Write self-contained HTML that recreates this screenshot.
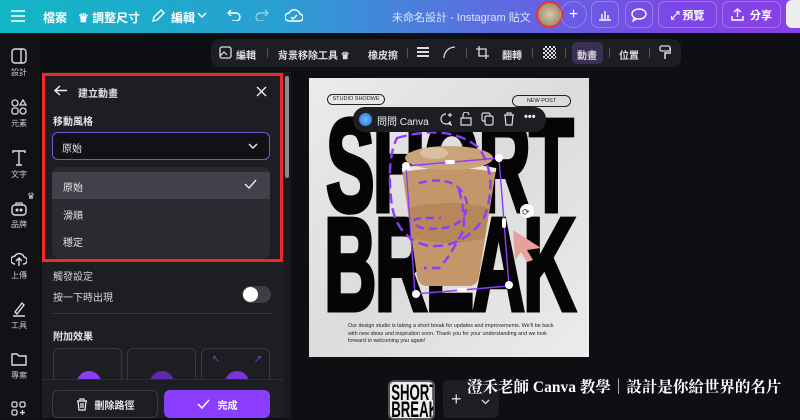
<!DOCTYPE html>
<html><head><meta charset="utf-8"><style>
*{box-sizing:border-box;margin:0;padding:0}
body{width:800px;height:418px;overflow:hidden;background:#0e0f13;font-family:"Liberation Sans","Noto Sans CJK TC",sans-serif;color:#e6e6ea;position:relative;font-size:11px}
.abs{position:absolute}
.top{left:0;top:0;width:800px;height:33px;background:linear-gradient(90deg,#11b7c4 0%,#2a9fd2 35%,#5a6fe0 60%,#7d46e6 85%,#8a3fe8 100%)}
.top .t{position:absolute;top:9px;color:#fff;font-size:12px;font-weight:bold}
.btn{position:absolute;top:1px;height:27px;border:1px solid rgba(255,255,255,.25);border-radius:7px;color:#fff;font-size:11px;font-weight:bold;display:flex;align-items:center;justify-content:center;gap:6px}
.side{left:0;top:33px;width:40px;height:385px;background:#111216}
.si{position:absolute;left:0;width:32px;text-align:center;font-size:8px;color:#ccc}
.si svg{display:block;margin:0 auto 3px}
.panel{left:42px;top:72px;width:242px;height:346px;background:#1d1e23}
.red{left:42px;top:73px;width:241px;height:189px;border:3px solid #f0282a}
.tb{left:211px;top:39px;width:470px;height:28px;background:#1d1e23;border-radius:9px}
.tb span{position:absolute;top:8px;font-size:10px;font-weight:bold;color:#ddd}
.sep{position:absolute;top:9px;width:1px;height:10px;background:#555}
.big{position:absolute;left:-100px;width:480px;text-align:center;font-weight:bold;font-size:132px;line-height:100px;color:#050505;transform:scaleX(.55);letter-spacing:-3px;-webkit-text-stroke:5px #050505}
</style></head><body>
<div class="abs top">
 <svg class="abs" style="left:11px;top:10px" width="14" height="12"><path d="M0 1H14M0 6H14M0 11H14" stroke="#fff" stroke-width="1.6"/></svg>
 <span class="t" style="left:43px">檔案</span>
 <span class="t" style="left:78px">♛ 調整尺寸</span>
 <svg class="abs" style="left:151px;top:9px" width="14" height="14"><path d="M2 12L3 8 10 1 13 4 6 11Z" fill="none" stroke="#fff" stroke-width="1.4"/></svg>
 <span class="t" style="left:171px">編輯</span>
 <svg class="abs" style="left:197px;top:12px" width="10" height="6"><path d="M1 1L5 5 9 1" fill="none" stroke="#fff" stroke-width="1.4"/></svg>
 <svg class="abs" style="left:227px;top:9px" width="14" height="12"><path d="M4 1L1 4 4 7M1 4H9A4 4 0 0 1 9 12H5" fill="none" stroke="#fff" stroke-width="1.4"/></svg>
 <svg class="abs" style="left:255px;top:9px" width="14" height="12" opacity=".5"><path d="M10 1L13 4 10 7M13 4H5A4 4 0 0 0 5 12H9" fill="none" stroke="#fff" stroke-width="1.4"/></svg>
 <svg class="abs" style="left:285px;top:7px" width="18" height="16"><path d="M4 14A4 4 0 0 1 4 6 6 6 0 0 1 15 7 3.5 3.5 0 0 1 14 14Z M6 10L8 12 12 8" fill="none" stroke="#fff" stroke-width="1.4"/></svg>
 <span class="t" style="left:392px;font-weight:normal;color:#dfe6ff;font-size:11px">未命名設計 - Instagram 貼文</span>
 <div class="abs" style="left:536px;top:1px;width:27px;height:27px;border-radius:50%;background:radial-gradient(circle,#d8c8a8,#8a7a5a);border:2px solid #e8323a"></div>
 <div class="btn" style="left:560px;width:27px;border-radius:50%;font-size:16px;font-weight:normal">+</div>
 <div class="btn" style="left:591px;width:28px"><svg width="14" height="12"><path d="M1 11H13M4 10V5M7 10V2M10 10V6" stroke="#fff" stroke-width="1.4"/></svg></div>
 <div class="btn" style="left:625px;width:28px"><svg width="16" height="14"><ellipse cx="8" cy="6" rx="7" ry="5" fill="none" stroke="#fff" stroke-width="1.4"/><path d="M3 10L2 13 6 11" fill="none" stroke="#fff" stroke-width="1.2"/></svg></div>
 <div class="btn" style="left:658px;width:59px">⤢ 預覽</div>
 <div class="btn" style="left:722px;width:59px"><svg width="13" height="13"><path d="M6.5 9V1M3 4L6.5 1 10 4M1 8V12H12V8" fill="none" stroke="#fff" stroke-width="1.4"/></svg>分享</div>
 <div class="abs" style="left:786px;top:0;width:14px;height:28px;background:#eee;border-radius:6px 0 0 6px"></div>
</div>
<div class="abs side">
 <div class="si" style="top:15px;left:3px"><svg width="16" height="16"><rect x="1" y="1" width="14" height="14" rx="3" fill="none" stroke="#ddd" stroke-width="1.4"/><path d="M10 1V15" stroke="#ddd" stroke-width="1.4"/></svg>設計</div>
 <div class="si" style="top:66px;left:3px"><svg width="16" height="16"><circle cx="4" cy="4" r="3" fill="none" stroke="#ddd" stroke-width="1.3"/><path d="M12 1L15 6H9Z" fill="none" stroke="#ddd" stroke-width="1.3"/><rect x="1" y="9" width="6" height="6" rx="2" fill="none" stroke="#ddd" stroke-width="1.3"/><circle cx="12" cy="12" r="3" fill="none" stroke="#ddd" stroke-width="1.3"/></svg>元素</div>
 <div class="si" style="top:117px;left:3px"><svg width="16" height="16"><path d="M2 3V1H14V3M8 1V15M5 15H11" fill="none" stroke="#ddd" stroke-width="1.4"/></svg>文字</div>
 <div class="si" style="top:167px;left:3px"><svg width="16" height="16"><rect x="1" y="5" width="14" height="10" rx="3" fill="none" stroke="#ddd" stroke-width="1.4"/><path d="M5 5V3H11V5" fill="none" stroke="#ddd" stroke-width="1.3"/><circle cx="6" cy="10" r="1.5" fill="#ddd"/><circle cx="10" cy="10" r="1.5" fill="#ddd"/></svg>品牌</div>
 <div style="position:absolute;left:27px;top:158px;color:#ddd;font-size:9px">♛</div>
 <div class="si" style="top:218px;left:3px"><svg width="16" height="16"><path d="M4 13A4 4 0 0 1 4 5 5 5 0 0 1 13 6 3.5 3.5 0 0 1 12 13M8 15V8M5 10L8 7 11 10" fill="none" stroke="#ddd" stroke-width="1.4"/></svg>上傳</div>
 <div class="si" style="top:268px;left:3px"><svg width="16" height="16"><path d="M4 11L11 2 13 4 6 13ZM2 15H14" fill="none" stroke="#ddd" stroke-width="1.4"/></svg>工具</div>
 <div class="si" style="top:318px;left:3px"><svg width="16" height="16"><path d="M1 3H6L8 5H15V14H1Z" fill="none" stroke="#ddd" stroke-width="1.4"/></svg>專案</div>
 <div class="si" style="top:368px;left:3px"><svg width="16" height="16"><rect x="1" y="1" width="5" height="5" rx="1.5" fill="none" stroke="#ddd" stroke-width="1.3"/><rect x="9" y="1" width="5" height="5" rx="1.5" fill="none" stroke="#ddd" stroke-width="1.3"/><rect x="1" y="9" width="5" height="5" rx="1.5" fill="none" stroke="#ddd" stroke-width="1.3"/><path d="M11.5 9V14M9 11.5H14" stroke="#ddd" stroke-width="1.3"/></svg></div>
</div>

<div class="abs panel">
 <svg class="abs" style="left:12px;top:13px" width="13" height="11"><path d="M6 1L1 5.5 6 10M1 5.5H13" fill="none" stroke="#eee" stroke-width="1.5"/></svg>
 <div class="abs" style="left:36px;top:13px;font-size:10px;font-weight:bold">建立動畫</div>
 <svg class="abs" style="left:214px;top:14px" width="11" height="11"><path d="M1 1L10 10M10 1L1 10" stroke="#eee" stroke-width="1.4"/></svg>
 <div class="abs" style="left:11px;top:41px;font-size:10px;font-weight:bold">移動風格</div>
 <div class="abs" style="left:10px;top:60px;width:218px;height:28px;border:1.5px solid #7a55d6;border-radius:6px;background:#111216"></div>
 <div class="abs" style="left:20px;top:68px;font-size:10px">原始</div>
 <svg class="abs" style="left:206px;top:71px" width="10" height="6"><path d="M1 1L5 5 9 1" fill="none" stroke="#eee" stroke-width="1.4"/></svg>
 <div class="abs" style="left:10px;top:95px;width:218px;height:92px;background:#2a2b31;border-radius:8px;overflow:hidden">
  <div style="position:absolute;left:0;top:5px;width:218px;height:27px;background:#40414a"></div>
 </div>
 <div class="abs" style="left:21px;top:107px;font-size:10px">原始</div>
 <svg class="abs" style="left:202px;top:107px" width="13" height="10"><path d="M1 5L5 9 12 1" fill="none" stroke="#eee" stroke-width="1.4"/></svg>
 <div class="abs" style="left:21px;top:135px;font-size:10px">滑順</div>
 <div class="abs" style="left:21px;top:162px;font-size:10px">穩定</div>
 <div class="abs" style="left:11px;top:196px;font-size:10px;color:#ccc">觸發設定</div>
 <div class="abs" style="left:11px;top:217px;font-size:10px;color:#ddd">按一下時出現</div>
 <div class="abs" style="left:200px;top:214px;width:29px;height:17px;border-radius:9px;background:#3d3e45"></div>
 <div class="abs" style="left:201px;top:215px;width:15px;height:15px;border-radius:50%;background:#fff"></div>
 <div class="abs" style="left:11px;top:241px;width:218px;height:1px;background:#3a3b42"></div>
 <div class="abs" style="left:11px;top:256px;font-size:10px;font-weight:bold">附加效果</div>
 <div class="abs" style="left:11px;top:276px;width:69px;height:40px;border:1px solid #3a3b42;border-bottom:none;border-radius:6px 6px 0 0;overflow:hidden"><div style="position:absolute;left:23px;top:22px;width:24px;height:24px;border-radius:50%;background:#8a3ff0"></div></div>
 <div class="abs" style="left:85px;top:276px;width:69px;height:40px;border:1px solid #3a3b42;border-bottom:none;border-radius:6px 6px 0 0;overflow:hidden"><div style="position:absolute;left:22px;top:22px;width:24px;height:24px;border-radius:50%;background:#5b2ba8"></div></div>
 <div class="abs" style="left:159px;top:276px;width:69px;height:40px;border:1px solid #3a3b42;border-bottom:none;border-radius:6px 6px 0 0;overflow:hidden"><div style="position:absolute;left:23px;top:22px;width:24px;height:24px;border-radius:50%;background:#7a35d8"></div><div style="position:absolute;left:10px;top:5px;color:#9b5cf5;font-size:8px">↖</div><div style="position:absolute;left:52px;top:5px;color:#9b5cf5;font-size:8px">↗</div></div>
 <div class="abs" style="left:0;top:307px;width:242px;height:39px;background:#1d1e23;border-top:1px solid #2c2d33"></div>
 <div class="abs" style="left:10px;top:318px;width:106px;height:28px;border:1px solid #3c3d44;border-radius:6px;display:flex;align-items:center;justify-content:center;gap:7px;font-size:10px;font-weight:bold"><svg width="12" height="13"><path d="M1 3H11M4 3V1H8V3M2 3L3 12H9L10 3M5 5V10M7 5V10" fill="none" stroke="#eee" stroke-width="1.2"/></svg>刪除路徑</div>
 <div class="abs" style="left:122px;top:318px;width:106px;height:28px;background:#8b3dff;border-radius:6px;display:flex;align-items:center;justify-content:center;gap:8px;font-size:10px;font-weight:bold;color:#fff"><svg width="13" height="10"><path d="M1 5L5 9 12 1" fill="none" stroke="#fff" stroke-width="1.5"/></svg>完成</div>
</div>
<div class="abs" style="left:284px;top:72px;width:7px;height:346px;background:#18191d"></div>
<div class="abs" style="left:285px;top:76px;width:4px;height:102px;background:#8a8b90;border-radius:2px"></div>
<div class="abs red"></div>

<div class="abs tb">
 <svg class="abs" style="left:8px;top:7px" width="13" height="13"><rect x="1" y="1" width="11" height="11" rx="2" fill="none" stroke="#ddd" stroke-width="1.3"/><path d="M1 10L5 6 8 9" fill="none" stroke="#ddd" stroke-width="1.2"/></svg>
 <span style="left:25px">編輯</span><div class="sep" style="left:56px"></div>
 <span style="left:67px">背景移除工具 ♛</span>
 <span style="left:157px">橡皮擦</span><div class="sep" style="left:196px"></div>
 <svg class="abs" style="left:206px;top:8px" width="12" height="11"><path d="M0 1H12M0 5H12M0 9H12" stroke="#ddd" stroke-width="2"/></svg>
 <svg class="abs" style="left:232px;top:7px" width="12" height="12"><path d="M1 12A11 11 0 0 1 12 1" fill="none" stroke="#ddd" stroke-width="1.3"/></svg>
 <div class="sep" style="left:255px"></div>
 <svg class="abs" style="left:265px;top:7px" width="13" height="13"><path d="M3 0V10H13M0 3H10V13" fill="none" stroke="#ddd" stroke-width="1.3"/></svg>
 <span style="left:291px">翻轉</span><div class="sep" style="left:321px"></div>
 <div class="abs" style="left:332px;top:7px;width:13px;height:13px;background:repeating-conic-gradient(#ddd 0 25%,transparent 0 50%) 0 0/4px 4px"></div>
 <div class="sep" style="left:354px"></div>
 <div class="abs" style="left:361px;top:3px;width:31px;height:22px;background:#3a2f55;border-radius:5px"></div>
 <span style="left:366px">動畫</span><div class="sep" style="left:398px"></div>
 <span style="left:408px">位置</span><div class="sep" style="left:438px"></div>
 <svg class="abs" style="left:448px;top:6px" width="12" height="15"><rect x="1" y="1" width="10" height="5" rx="1.5" fill="none" stroke="#ddd" stroke-width="1.3"/><path d="M11 4H12V8H6V14" fill="none" stroke="#ddd" stroke-width="1.5"/></svg>
</div>

<!-- canvas -->
<div class="abs" style="left:309px;top:78px;width:280px;height:279px;background:linear-gradient(135deg,#ebebeb,#dcdcdc 50%,#ececec);overflow:hidden">
 <div class="abs" style="left:18px;top:16px;width:58px;height:11px;border:1px solid #222;border-radius:6px;font-size:5.5px;color:#222;text-align:center;line-height:9px">STUDIO SHODWE</div>
 <div class="abs" style="left:203px;top:17px;width:59px;height:12px;border:1px solid #222;border-radius:6px;font-size:5.5px;color:#222;text-align:center;line-height:10px">NEW POST</div>
 <div class="big" style="top:38px">SHORT</div>
 <div class="big" style="top:137px">BREAK</div>
 <svg class="abs" style="left:0;top:0" width="280" height="279">
  <path d="M93 92Q95 86 140 86Q185 86 187 92L170 198Q168 208 160 208H118Q110 208 108 198Z" fill="#c4976a"/>
  <path d="M100 130Q140 120 180 130L176 160Q140 170 104 160Z" fill="#a97548" opacity=".5"/>
  <path d="M93 92Q140 84 187 92" fill="none" stroke="#ece6dc" stroke-width="4"/>
  <ellipse cx="140" cy="80" rx="44" ry="12" fill="#c9a47a"/>
  <ellipse cx="125" cy="75" rx="14" ry="6" fill="#d9c0a0"/>
  <path d="M88 60Q140 45 170 70Q190 100 175 140Q155 170 120 168Q85 160 82 120Q78 80 88 60Z" fill="none" stroke="#8b3dff" stroke-width="2.4" stroke-dasharray="10 5"/>
  <path d="M150 112Q160 150 150 160Q140 180 130 190H115" fill="none" stroke="#8b3dff" stroke-width="2.4" stroke-dasharray="9 5"/>
  <path d="M110 105Q150 95 158 125Q158 155 112 150Q95 140 118 140H132" fill="none" stroke="#8b3dff" stroke-width="2.4" stroke-dasharray="8 5"/>
  <path d="M97 88L190 80 200 208 106 216Z" fill="none" stroke="#8b3dff" stroke-width="1.4"/>
  <circle cx="97" cy="88" r="4" fill="#fff"/><circle cx="190" cy="80" r="4" fill="#fff"/><circle cx="200" cy="207" r="4" fill="#fff"/><circle cx="107" cy="216" r="4" fill="#fff"/>
  <rect x="136" y="82" width="10" height="4" rx="2" fill="#fff"/><rect x="148" y="210" width="10" height="4" rx="2" fill="#fff"/><rect x="193" y="140" width="4" height="10" rx="2" fill="#fff"/>
  <circle cx="218" cy="133" r="7" fill="#fff"/><text x="213" y="137" font-size="9" fill="#333">⟳</text>
  <path d="M204 152L232 170 218 172 224 182 218 184 212 174 206 182Z" fill="#e8a09a"/>
 </svg>
 <div class="abs" style="left:39px;top:245px;width:210px;font-size:5.4px;line-height:7.5px;color:#222">Our design studio is taking a short break for updates and improvements. We'll be back with new ideas and inspiration soon. Thank you for your understanding and we look forward to welcoming you again!</div>
</div>
<!-- float bar -->
<div class="abs" style="left:353px;top:107px;width:193px;height:25px;background:#1d1e23;border-radius:12px">
 <div class="abs" style="left:6px;top:6px;width:13px;height:13px;border-radius:50%;background:radial-gradient(circle,#5bc8ff,#3a5be0)"></div>
 <div class="abs" style="left:24px;top:6px;font-size:10px;color:#eee">問問 Canva</div>
 <svg class="abs" style="left:86px;top:5px" width="14" height="14"><path d="M7 2A5 5 0 1 0 11 10L12 13 9 11.5M11 1V5M9 3H13" fill="none" stroke="#ddd" stroke-width="1.2"/></svg>
 <svg class="abs" style="left:107px;top:5px" width="12" height="14"><path d="M3 6V3A3 3 0 0 1 9 3M1 6H11V13H1Z" fill="none" stroke="#ddd" stroke-width="1.2"/></svg>
 <svg class="abs" style="left:128px;top:5px" width="13" height="14"><rect x="1" y="1" width="8" height="8" rx="1.5" fill="none" stroke="#ddd" stroke-width="1.2"/><rect x="4" y="4" width="8" height="9" rx="1.5" fill="#1d1e23" stroke="#ddd" stroke-width="1.2"/></svg>
 <svg class="abs" style="left:150px;top:5px" width="12" height="14"><path d="M1 3H11M4 3V1H8V3M2 3L3 13H9L10 3" fill="none" stroke="#ddd" stroke-width="1.2"/></svg>
 <div class="abs" style="left:171px;top:4px;font-size:11px;color:#eee;font-weight:bold">•••</div>
</div>
<!-- bottom -->
<div class="abs" style="left:388px;top:380px;width:47px;height:40px;border:2px solid #555;border-radius:6px;background:#eee;overflow:hidden"><div style="font-weight:bold;color:#000;font-size:22px;line-height:17px;transform:scaleX(.6);transform-origin:0 0;width:80px;padding:2px">SHORT BREAK</div></div>
<div class="abs" style="left:443px;top:380px;width:56px;height:38px;background:#1d1e23;border-radius:6px"></div>
<div class="abs" style="left:451px;top:389px;font-size:18px;color:#ddd">+</div>
<svg class="abs" style="left:481px;top:399px" width="9" height="6"><path d="M1 1L4.5 4.5 8 1" fill="none" stroke="#ddd" stroke-width="1.3"/></svg>
<div class="abs" style="left:467px;top:375px;font-family:'Liberation Serif','Noto Serif CJK SC',serif;font-weight:bold;font-size:15.5px;color:#fff;white-space:nowrap">澄禾老師 Canva 教學｜設計是你給世界的名片</div>
</body></html>
